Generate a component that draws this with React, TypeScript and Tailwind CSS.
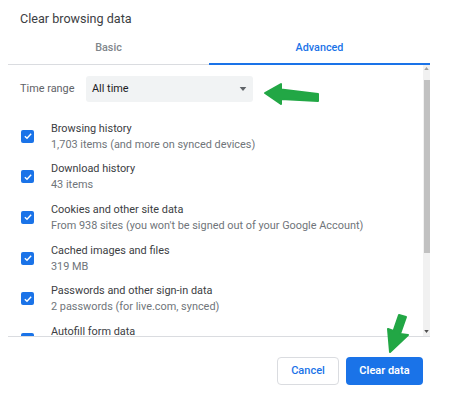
import React from 'react';

const items = [
  { title: 'Browsing history', sub: '1,703 items (and more on synced devices)' },
  { title: 'Download history', sub: '43 items' },
  { title: 'Cookies and other site data', sub: "From 938 sites (you won't be signed out of your Google Account)" },
  { title: 'Cached images and files', sub: '319 MB' },
  { title: 'Passwords and other sign-in data', sub: '2 passwords (for live.com, synced)' },
  { title: 'Autofill form data', sub: '' },
];

const CheckBox = () => (
  <span className="flex h-[13px] w-[13px] shrink-0 items-center justify-center rounded-[2px] bg-[#1a73e8]">
    <svg viewBox="0 0 12 12" className="h-[10px] w-[10px]">
      <path d="M2.2 6.3 L4.8 8.8 L9.8 3.4" fill="none" stroke="#fff" strokeWidth="1.7" />
    </svg>
  </span>
);

export default function App() {
  return (
    <div className="relative h-[399px] w-[450px] overflow-hidden bg-white font-['Roboto',sans-serif]">
      <div className="ml-2 flex w-[422px] flex-col">
        {/* Title */}
        <div className="pl-3 pt-[11px] pb-[4px] text-[12.6px] leading-[16px] text-[#3c4043]">
          Clear browsing data
        </div>

        {/* Tabs */}
        <div className="flex h-[34px]">
          <div className="flex flex-1 items-center justify-center border-b border-[#dadce0] pt-[1px] text-[10.8px] font-medium text-[#80868b]">
            Basic
          </div>
          <div className="flex w-[221px] items-center justify-center border-b-2 border-[#1a73e8] pt-[2px] text-[10.8px] font-medium text-[#1a73e8]">
            Advanced
          </div>
        </div>

        {/* Scroll area */}
        <div className="flex h-[272px] border-b border-[#dadce0]">
          <div className="flex flex-1 flex-col overflow-hidden">
            <div className="flex items-center gap-[8px] pl-3 pt-[11px]">
              <span className="w-[58px] text-[10.9px] text-[#5f6368]">Time range</span>
              <div className="flex h-[26px] w-[167px] items-center justify-between rounded-[3px] bg-[#f1f3f4] pl-[6px] pr-[6px]">
                <span className="text-[10.9px] text-[#202124]">All time</span>
                <svg viewBox="0 0 10 6" className="h-[4px] w-[8px]">
                  <path d="M0 0 L10 0 L5 6 Z" fill="#5f6368" />
                </svg>
              </div>
            </div>

            <div className="flex flex-col pt-[14px]">
              {items.map((it) => (
                <div key={it.title} className="flex h-[40.6px] shrink-0 items-center gap-[17px] pl-[13px]">
                  <CheckBox />
                  <div className="flex flex-col">
                    <span className="text-[10.9px] leading-[17px] text-[#3c4043]">{it.title}</span>
                    <span className="text-[10.9px] leading-[16px] text-[#70757a]">{it.sub || '\u00a0'}</span>
                  </div>
                </div>
              ))}
            </div>
          </div>

          {/* Scrollbar */}
          <div className="flex w-[7px] flex-col items-center bg-[#f1f1f1] pt-[2px] pb-[3px]">
            <svg viewBox="0 0 6 4" className="h-[3px] w-[5px]">
              <path d="M0 4 L6 4 L3 0 Z" fill="#a0a0a0" />
            </svg>
            <div className="mt-[10px] h-[173px] w-[6px] bg-[#c1c1c1]" />
            <div className="flex-1" />
            <svg viewBox="0 0 6 4" className="h-[3px] w-[5px]">
              <path d="M0 0 L6 0 L3 4 Z" fill="#505050" />
            </svg>
          </div>
        </div>

        {/* Footer */}
        <div className="flex justify-end gap-[7px] pr-[7px] pt-[20px]">
          <button className="h-[28px] w-[62px] rounded-[4px] border border-[#dadce0] bg-white text-[11px] font-medium text-[#1a73e8]">
            Cancel
          </button>
          <button className="h-[28px] w-[77px] rounded-[4px] bg-[#1a73e8] text-[11px] font-semibold text-white">
            Clear data
          </button>
        </div>
      </div>

      {/* Annotation arrows */}
      <svg className="pointer-events-none absolute left-0 top-0" width="450" height="399" viewBox="0 0 450 399">
        <path
          d="M265 93 L281 84 L281 89.5 L318 94 L318 101 L281 99 L281 104 Z"
          fill="#22a745"
          stroke="#22a745"
          strokeWidth="2"
          strokeLinejoin="round"
        />
        <path
          d="M399 315 L406 317 L400 334 L408 335 L390 352 L388 329 L393.5 331 Z"
          fill="#22a745"
          stroke="#22a745"
          strokeWidth="2"
          strokeLinejoin="round"
        />
      </svg>
    </div>
  );
}
